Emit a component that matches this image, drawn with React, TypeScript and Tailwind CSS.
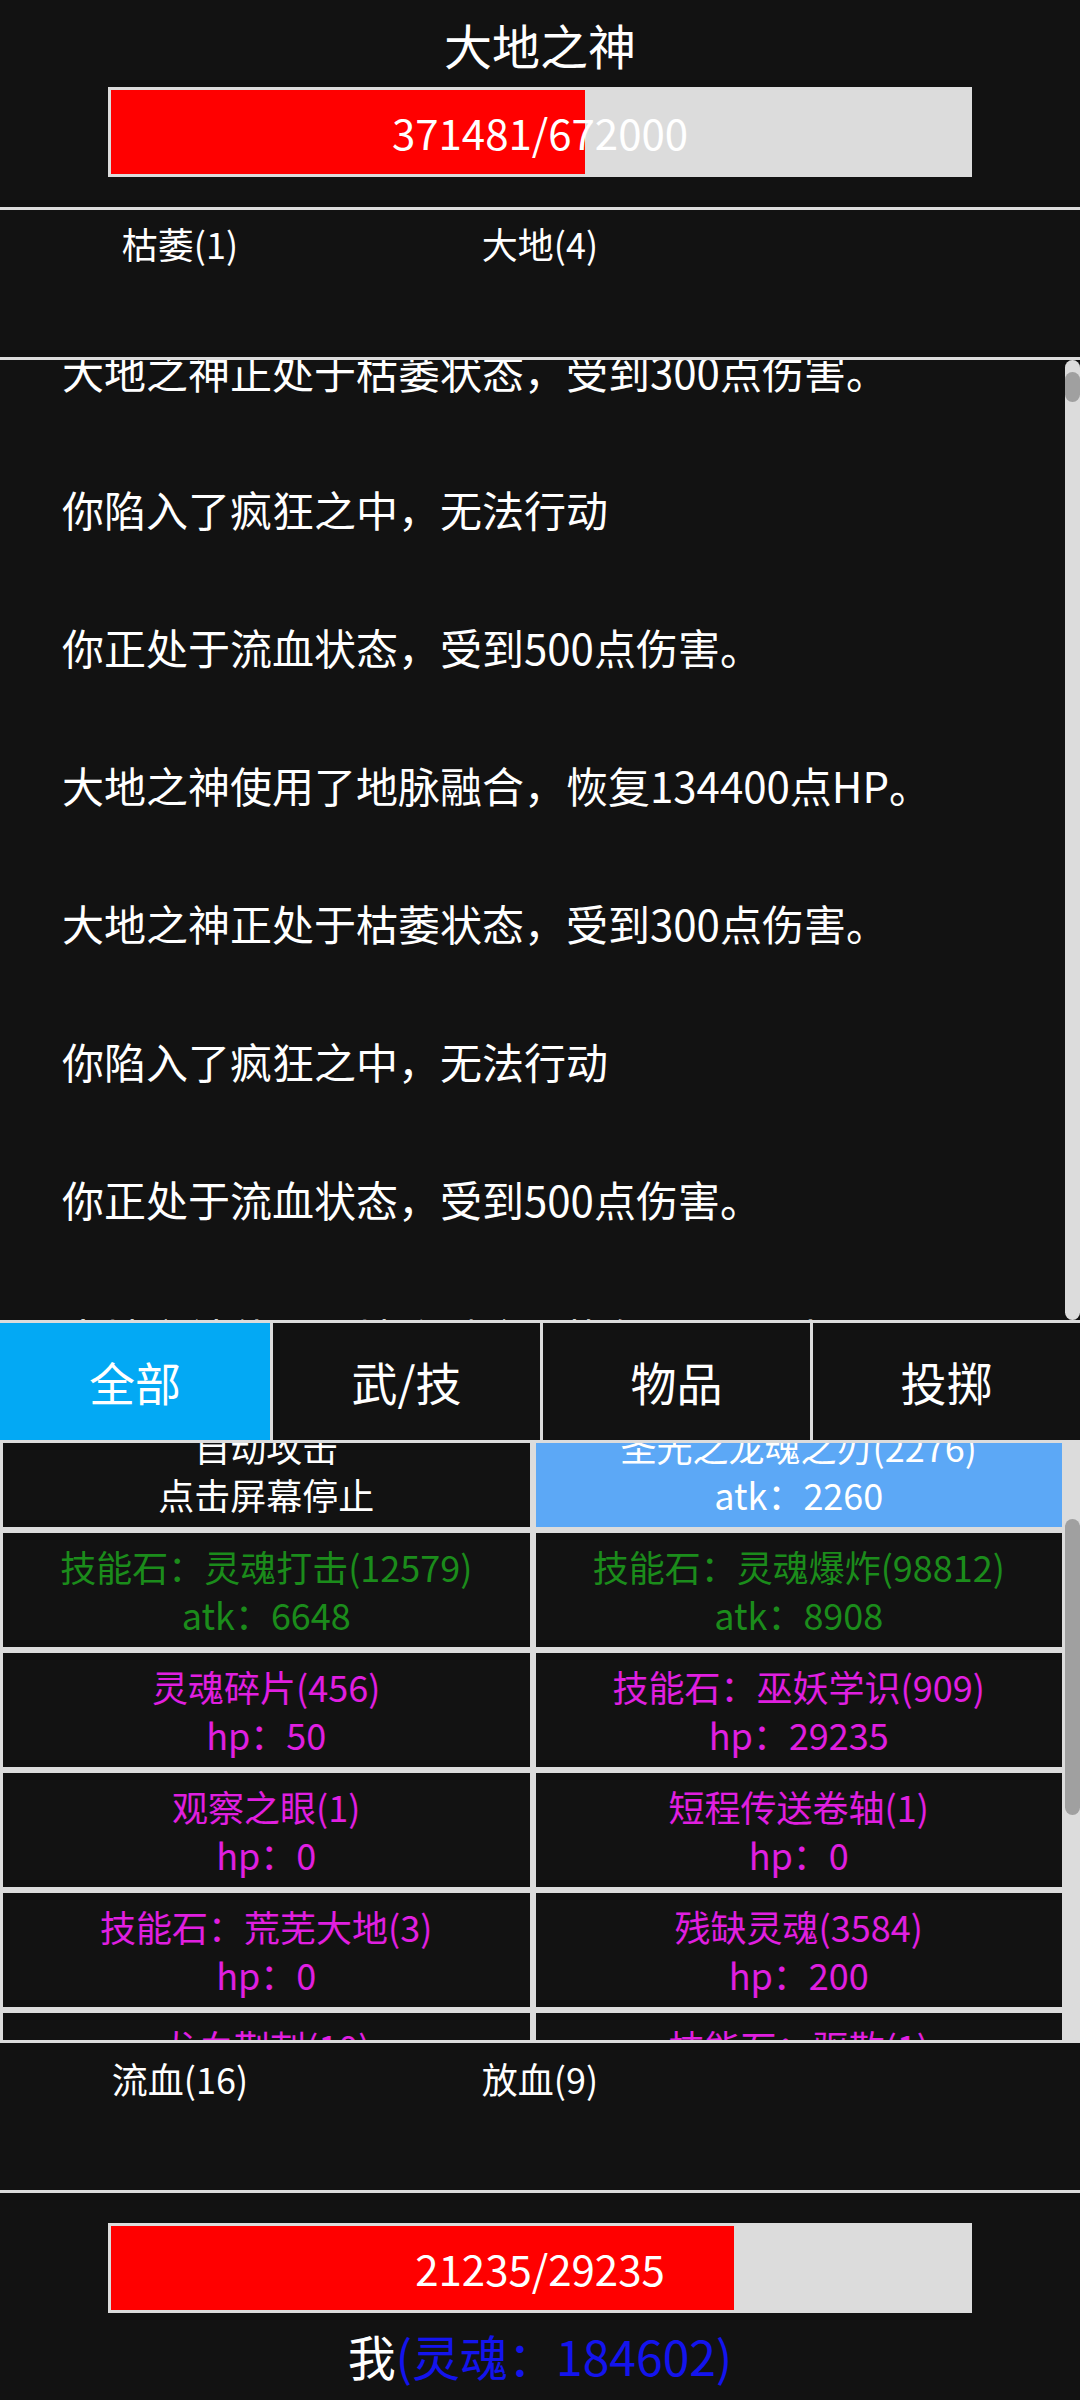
import React from 'react';

type Cell = { name: string; stat: string; color: string; active?: boolean };

const font = { fontFamily: '"Noto Sans CJK SC", "Noto Sans", sans-serif' };

const logs = [
  '大地之神正处于枯萎状态，受到300点伤害。',
  '你陷入了疯狂之中，无法行动',
  '你正处于流血状态，受到500点伤害。',
  '大地之神使用了地脉融合，恢复134400点HP。',
  '大地之神正处于枯萎状态，受到300点伤害。',
  '你陷入了疯狂之中，无法行动',
  '你正处于流血状态，受到500点伤害。',
  '大地之神使用了地脉融合，恢复134400点HP。',
];

const cells: Cell[] = [
  { name: '自动攻击', stat: '点击屏幕停止', color: 'text-white' },
  { name: '圣光之龙魂之刃(2276)', stat: 'atk：2260', color: 'text-white', active: true },
  { name: '技能石：灵魂打击(12579)', stat: 'atk：6648', color: 'text-[#1b8c1b]' },
  { name: '技能石：灵魂爆炸(98812)', stat: 'atk：8908', color: 'text-[#1b8c1b]' },
  { name: '灵魂碎片(456)', stat: 'hp：50', color: 'text-[#e01fe0]' },
  { name: '技能石：巫妖学识(909)', stat: 'hp：29235', color: 'text-[#e01fe0]' },
  { name: '观察之眼(1)', stat: 'hp：0', color: 'text-[#e01fe0]' },
  { name: '短程传送卷轴(1)', stat: 'hp：0', color: 'text-[#e01fe0]' },
  { name: '技能石：荒芜大地(3)', stat: 'hp：0', color: 'text-[#e01fe0]' },
  { name: '残缺灵魂(3584)', stat: 'hp：200', color: 'text-[#e01fe0]' },
  { name: '龙血荆刺(10)', stat: 'hp：0', color: 'text-[#e01fe0]' },
  { name: '技能石：驱散(1)', stat: 'hp：0', color: 'text-[#e01fe0]' },
];

const tabs = ['全部', '武/技', '物品', '投掷'];

const HpBar = ({ cur, max }: { cur: number; max: number }) => (
  <div className="relative mx-auto w-[80%] h-[90px] bg-[#dcdcdc] p-[3px]">
    <div className="h-full bg-[#ff0000]" style={{ width: `${(cur / max) * 100}%` }} />
    <div className="absolute inset-0 flex items-center justify-center text-[42px] text-white leading-none">
      {cur}/{max}
    </div>
  </div>
);

const Divider = () => <div className="h-[3px] bg-[#dcdcdc]" />;

const StatusRow = ({ items, top }: { items: string[]; top: string }) => (
  <div className={`h-[147px] grid grid-cols-3 content-start ${top}`}>
    {items.map((s) => (
      <div key={s} className="text-center text-[36px] leading-[48px] text-white">
        {s}
      </div>
    ))}
  </div>
);

export default function App() {
  return (
    <div className="w-[1080px] h-[2400px] bg-[#121212] text-white overflow-hidden flex flex-col" style={font}>
      {/* boss header */}
      <div className="pt-[16px] pb-[30px]">
        <div className="text-center text-[48px] leading-[56px]">大地之神</div>
        <div className="mt-[15px]">
          <HpBar cur={371481} max={672000} />
        </div>
      </div>
      <Divider />
      <StatusRow items={['枯萎(1)', '大地(4)']} top="pt-[9px]" />
      <Divider />

      {/* battle log */}
      <div className="h-[960px] flex">
        <div className="flex-1 overflow-hidden">
          <div className="-mt-[58px]">
            {logs.map((l, i) => (
              <div key={i} className="h-[138px] flex items-center pl-[62px] text-[42px] leading-none whitespace-nowrap">
                {l}
              </div>
            ))}
          </div>
        </div>
        <div className="w-[15px] bg-[#dcdcdc] rounded-full flex flex-col">
          <div className="h-[12px]" />
          <div className="h-[30px] bg-[#a0a0a0] rounded-full" />
        </div>
      </div>
      <Divider />

      {/* tabs */}
      <div className="h-[117px] flex">
        {tabs.map((t, i) => (
          <div
            key={t}
            className={`w-[270px] flex items-center justify-center text-[46px] ${
              i > 0 ? 'border-l-[3px] border-[#dcdcdc]' : ''
            } ${i === 0 ? 'bg-[#03a9f4]' : ''}`}
          >
            {t}
          </div>
        ))}
      </div>
      <Divider />

      {/* inventory grid */}
      <div className="h-[597px] flex bg-[#dcdcdc]">
        <div className="flex-1 overflow-hidden px-[3px]">
          <div className="-mt-[30px] grid grid-cols-2 gap-[6px]">
            {cells.map((c, i) => (
              <div
                key={i}
                className={`h-[114px] flex flex-col items-center justify-center text-[36px] leading-[48px] ${c.color} ${
                  c.active ? 'bg-[#5ca8f6]' : 'bg-[#121212]'
                }`}
              >
                <div className="whitespace-nowrap">{c.name}</div>
                <div className="whitespace-nowrap">{c.stat}</div>
              </div>
            ))}
          </div>
        </div>
        <div className="w-[15px] rounded-full flex flex-col">
          <div className="h-[76px]" />
          <div className="h-[296px] bg-[#a0a0a0] rounded-full" />
        </div>
      </div>
      <Divider />
      <StatusRow items={['流血(16)', '放血(9)']} top="pt-[11px]" />
      <Divider />

      {/* player footer */}
      <div className="pt-[30px]">
        <HpBar cur={21235} max={29235} />
        <div className="mt-[14px] text-center text-[48px] leading-[56px]">
          我<span className="text-[#1414ee]">(灵魂：184602)</span>
        </div>
      </div>
    </div>
  );
}
